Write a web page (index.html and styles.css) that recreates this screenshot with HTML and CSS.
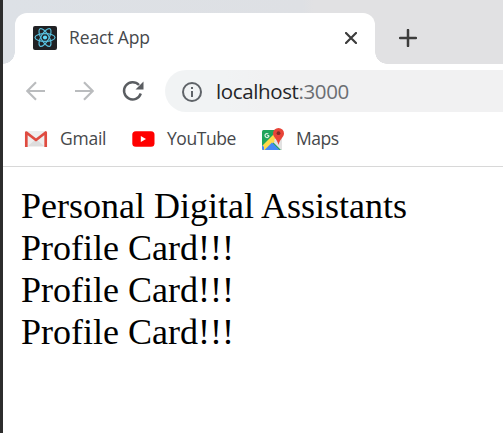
FILE: index.html
```
<!DOCTYPE html>
<html lang="en">
<head>
<meta charset="utf-8">
<title>React App</title>
<link rel="stylesheet" href="styles.css">
</head>
<body>
<div class="window">
  <header class="tabstrip">
    <div class="tab">
      <svg class="favicon" viewBox="0 0 24 24">
        <rect width="24" height="24" rx="2" fill="#202124"/>
        <g fill="none" stroke="#58bfdc" stroke-width="1.2">
          <ellipse cx="12" cy="11.500" rx="10" ry="3.900"/>
          <ellipse cx="12" cy="11.500" rx="10" ry="3.900" transform="rotate(60 12 11.500)"/>
          <ellipse cx="12" cy="11.500" rx="10" ry="3.900" transform="rotate(120 12 11.500)"/>
        </g>
        <circle cx="12" cy="11.500" r="2.100" fill="#61dafb"/>
      </svg>
      <span class="tab-title">React App</span>
      <svg class="close" viewBox="0 0 12 12"><path d="M1 1l10 10M11 1L1 11" fill="none" stroke="#3c3c3c" stroke-width="2.2" stroke-linecap="round"/></svg>
    </div>
    <svg class="plus" viewBox="0 0 18 18"><path d="M9 1v16M1 9h16" fill="none" stroke="#3c3c3c" stroke-width="2.500" stroke-linecap="round"/></svg>
  </header>
  <nav class="toolbar">
    <svg class="arrow" viewBox="0 0 20 20"><path d="M19 10H1.500M10 1.200L1.200 10L10 18.800" fill="none" stroke="#babcbe" stroke-width="2.200"/></svg>
    <svg class="arrow forward" viewBox="0 0 20 20"><path d="M1 10h17.500M10 1.200L18.800 10L10 18.800" fill="none" stroke="#babcbe" stroke-width="2.200"/></svg>
    <svg class="reload" viewBox="0 0 22 22"><path d="M18.800 13.500A8.600 8.600 0 1 1 17 5" fill="none" stroke="#5a5d61" stroke-width="2.400"/><path d="M21.500 1.500v8H13.500z" fill="#5a5d61"/></svg>
    <div class="address">
      <svg class="info" viewBox="0 0 20 20"><circle cx="10" cy="10" r="9" fill="none" stroke="#5f6368" stroke-width="2"/><path d="M9 5h2v2H9zM9 9h2v6H9z" fill="#5f6368"/></svg>
      <span class="url">localhost<span class="port">:3000</span></span>
    </div>
  </nav>
  <div class="bookmarks">
    <svg class="gmail" viewBox="0 0 24 18">
      <rect x="1" y="1" width="22" height="16" rx="1.500" fill="#eee"/>
      <path d="M4 16l8-7 8 7z" fill="#ddd"/>
      <path d="M2.300 17V2.500L12 10l9.700-7.500V17" fill="none" stroke="#df4b40" stroke-width="2.700" stroke-linejoin="round"/>
    </svg>
    <span class="label gmail-label">Gmail</span>
    <svg class="youtube" viewBox="0 0 23 16"><rect x=".300" y=".200" width="22.200" height="15.600" rx="3.500" fill="#f00"/><path d="M8.800 5v6l5.200-3z" fill="#fff"/></svg>
    <span class="label youtube-label">YouTube</span>
    <svg class="maps" viewBox="0 0 24 24">
      <defs><clipPath id="tile"><rect x="1" y="3" width="20" height="20" rx="1.500"/></clipPath></defs>
      <g clip-path="url(#tile)">
        <path d="M0 0h24v24H0z" fill="#20a45b"/>
        <path d="M11 14L21 4v20z" fill="#e2e2e2"/>
        <path d="M0 20L16 4l5 3L3 25H0z" fill="#ffd94b"/>
        <path d="M3 20L0 17v7h3z" fill="#4688f4"/>
        <path d="M13 13L21 5v19z" fill="#e2e2e2"/>
        <path d="M3 23.500l8-8 8 8z" fill="#4688f4"/>
      </g>
      <path d="M8 8.500H6.200M8 8.500a2 2 0 1 1-.7-1.500" fill="none" stroke="#d9f0e2" stroke-width="1.200"/>
      <path d="M17.500 1a5.500 5.500 0 0 0-5.500 5.500c0 3.700 4 5.200 5.500 11.500 1.500-6.300 5.500-7.800 5.500-11.500A5.500 5.500 0 0 0 17.500 1z" fill="#e84438"/>
      <circle cx="17.500" cy="6.200" r="1.900" fill="#812b26"/>
    </svg>
    <span class="label maps-label">Maps</span>
  </div>
  <main class="page">
    <div>Personal Digital Assistants</div>
    <div>Profile Card!!!</div>
    <div>Profile Card!!!</div>
    <div>Profile Card!!!</div>
  </main>
</div>
</body>
</html>
```
FILE: styles.css
```
* { box-sizing: border-box; }
body { margin: 0; background: #fff; overflow: hidden; font-family: "Open Sans", sans-serif; }
svg { display: block; flex: none; }
.window { height: 433px; border-left: 3px solid #2d2d2d; }
.tabstrip { display: flex; height: 64px; padding: 13px 0 0 12px; background: linear-gradient(90deg, #dde1e6 0, #dee0e4 300px, #e1e1e3 310px); }
.tab { position: relative; display: flex; align-items: center; width: 360px; height: 51px; padding: 0 0 1px 18px; background: #fff; border-radius: 12px 12px 0 0; }
.tab::before, .tab::after { content: ""; position: absolute; bottom: 0; width: 12px; height: 12px; }
.tab::before { left: -12px; background: radial-gradient(circle at 0 0, transparent 11.5px, #fff 12px); }
.tab::after { right: -12px; background: radial-gradient(circle at 100% 0, transparent 11.5px, #fff 12px); }
.favicon { width: 24px; height: 24px; }
.tab-title { width: 100px; margin-left: 12px; padding-bottom: 3px; font-size: 17.5px; line-height: 24px; letter-spacing: -0.12px; color: #46484b; white-space: nowrap; }
.close { width: 12px; height: 12px; margin-left: 176px; }
.plus { width: 18px; height: 18px; margin: 16px 0 0 24px; }
.toolbar { display: flex; align-items: center; height: 54px; padding-left: 23px; }
.arrow { width: 20px; height: 20px; margin-bottom: 1px; }
.forward { margin-left: 28px; }
.reload { width: 22px; height: 22px; margin: 0 0 1px 28px; }
.address { display: flex; flex: 1; align-items: center; height: 42px; margin-left: 21px; padding-left: 17px; border-radius: 21px 0 0 21px; background: #f1f2f4; background: linear-gradient(90deg, #f1f3f4 60px, #f1f1f2 100px); }
.info { width: 20px; height: 20px; margin-top: 1px; }
.url { margin-left: 14px; font-size: 20.5px; line-height: 30px; letter-spacing: -0.38px; color: #242528; white-space: nowrap; }
.port { color: #6b6e72; }
.bookmarks { display: flex; align-items: center; height: 49px; padding: 0 0 6px 21px; border-bottom: 1px solid #d8d8d8; }
.gmail { width: 24px; height: 18px; }
.youtube { width: 23px; height: 16px; }
.maps { width: 24px; height: 24px; margin-bottom: 1px; }
.label { flex: none; margin-left: 12px; padding-bottom: 2px; font-size: 17.5px; line-height: 24px; letter-spacing: -0.45px; color: #46484b; white-space: nowrap; }
.gmail-label { width: 72px; letter-spacing: -0.25px; }
.youtube-label { width: 94px; }
.maps-label { margin-left: 11px; }
.page { padding: 18px 0 0 18px; font: 36px/42px "Liberation Serif", serif; color: #000; }
```
